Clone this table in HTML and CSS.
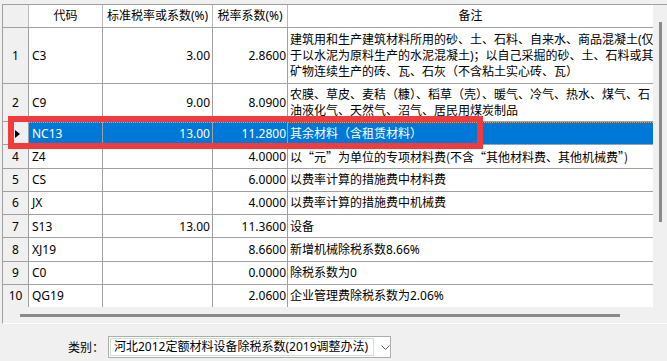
FILE: index.html
```html
<!DOCTYPE html>
<html lang="zh-CN">
<head>
<meta charset="utf-8">
<title>除税系数</title>
<link rel="stylesheet" href="styles.css">
</head>
<body>
<div class="panel">
  <div class="view">
    <div class="grid">
      <div class="row head">
        <div class="c rn"></div>
        <div class="c code center">代码</div>
        <div class="c std center">标准税率或系数(%)</div>
        <div class="c rate center">税率系数(%)</div>
        <div class="c note center">备注</div>
      </div>
      <div class="row tall3">
        <div class="c rn">1</div>
        <div class="c code">C3</div>
        <div class="c std">3.00</div>
        <div class="c rate">2.8600</div>
        <div class="c note multi"><span>建筑用和生产建筑材料所用的砂、土、石料、自来水、商品混凝土(仅<br>于以水泥为原料生产的水泥混凝土)；以自己采掘的砂、土、石料或其<br>矿物连续生产的砖、瓦、石灰（不含粘土实心砖、瓦）</span></div>
      </div>
      <div class="row tall2">
        <div class="c rn">2</div>
        <div class="c code">C9</div>
        <div class="c std">9.00</div>
        <div class="c rate">8.0900</div>
        <div class="c note multi"><span>农膜、草皮、麦秸（糠）、稻草（壳）、暖气、冷气、热水、煤气、石<br>油液化气、天然气、沼气、居民用煤炭制品</span></div>
      </div>
      <div class="row sel">
        <div class="c rn"><svg class="cur" width="5" height="8" viewBox="0 0 5 8"><polygon points="0,0 5,4 0,8" fill="#000"/></svg></div>
        <div class="c code">NC13</div>
        <div class="c std">13.00</div>
        <div class="c rate">11.2800</div>
        <div class="c note">其余材料（含租赁材料）</div>
      </div>
      <div class="row">
        <div class="c rn">4</div>
        <div class="c code">Z4</div>
        <div class="c std"></div>
        <div class="c rate">4.0000</div>
        <div class="c note cjk">以“元”为单位的专项材料费(不含“其他材料费、其他机械费”)</div>
      </div>
      <div class="row">
        <div class="c rn">5</div>
        <div class="c code">CS</div>
        <div class="c std"></div>
        <div class="c rate">6.0000</div>
        <div class="c note">以费率计算的措施费中材料费</div>
      </div>
      <div class="row">
        <div class="c rn">6</div>
        <div class="c code">JX</div>
        <div class="c std"></div>
        <div class="c rate">4.0000</div>
        <div class="c note">以费率计算的措施费中机械费</div>
      </div>
      <div class="row">
        <div class="c rn">7</div>
        <div class="c code">S13</div>
        <div class="c std">13.00</div>
        <div class="c rate">11.3600</div>
        <div class="c note">设备</div>
      </div>
      <div class="row">
        <div class="c rn">8</div>
        <div class="c code">XJ19</div>
        <div class="c std"></div>
        <div class="c rate">8.6600</div>
        <div class="c note">新增机械除税系数8.66%</div>
      </div>
      <div class="row">
        <div class="c rn">9</div>
        <div class="c code">C0</div>
        <div class="c std"></div>
        <div class="c rate">0.0000</div>
        <div class="c note">除税系数为0</div>
      </div>
      <div class="row last">
        <div class="c rn">10</div>
        <div class="c code">QG19</div>
        <div class="c std"></div>
        <div class="c rate">2.0600</div>
        <div class="c note">企业管理费除税系数为2.06%</div>
      </div>
    </div>
    <div class="hscroll"><span class="hthumb"></span></div>
  </div>
  <div class="vscroll"><span class="vthumb"></span></div>
</div>

<div class="mark"></div>

<div class="footer">
  <span class="label">类别：</span>
  <div class="combo">
    <span class="field">河北2012定额材料设备除税系数(2019调整办法)</span>
    <svg class="chev" width="9" height="5" viewBox="0 0 9 5"><polyline points="0.5,0.5 4.5,4.5 8.5,0.5" fill="none" stroke="#5a5a5a" stroke-width="1"/></svg>
  </div>
</div>
</body>
</html>
```

FILE: styles.css
```css
html, body {
  margin: 0;
  padding: 0;
}

body {
  width: 667px;
  height: 361px;
  overflow: hidden;
  position: relative;
  background: #f0f0f0;
  color: #000;
  font-family: "Noto Sans", "Noto Sans CJK SC", sans-serif;
  font-size: 12px;
}

.cjk {
  font-family: "Noto Sans CJK SC", sans-serif;
}

.panel {
  margin: 4px 0 0 2px;
  height: 318px;
  display: flex;
  border-left: 1px solid #a0a0a0;
  border-top: 1px solid #a0a0a0;
  border-bottom: 1px solid #ffffff;
}

.view {
  width: 650px;
  flex: none;
  display: flex;
  flex-direction: column;
  overflow: hidden;
}

.grid {
  display: flex;
  flex-direction: column;
  background: #fff;
}

.row {
  display: flex;
  height: 23.25px;
  box-sizing: border-box;
  border-bottom: 1px solid #a0a0a0;
}

.row.last {
  border-bottom-color: #f0f0f0;
}

.row.head {
  height: 23px;
}

.row.tall3 {
  height: 56px;
}

.row.tall2 {
  height: 38px;
}

.c {
  box-sizing: border-box;
  flex: none;
  display: flex;
  align-items: center;
  overflow: hidden;
  white-space: nowrap;
  border-right: 1px solid #a0a0a0;
  line-height: 16px;
  padding-top: 1px;
}

.rn {
  width: 26px;
  justify-content: center;
  background: #f0f0f0;
}

.code {
  width: 74px;
  padding-left: 3px;
}

.std {
  width: 110px;
  justify-content: flex-end;
  padding-right: 2px;
}

.rate {
  width: 75px;
  justify-content: flex-end;
  padding-right: 1px;
}

.note {
  width: 420px;
  padding-left: 2px;
  border-right: none;
}

.head .c {
  justify-content: center;
  padding: 0;
  border-right-color: #b9b9b9;
}

.head .note {
  width: 365px;
}

.sel .c:not(.rn) {
  color: #fff;
  background-color: #0078d7;
  background-image: linear-gradient(90deg, #f2a04a 50%, transparent 50%);
  background-size: 2px 1px;
  background-repeat: repeat-x;
  background-position: 0 0;
}

.cur {
  margin-left: 3px;
}

.hscroll {
  flex: 1;
  padding: 6px 0 0 17px;
}

.hthumb {
  display: block;
  width: 600px;
  height: 3px;
  background: #8a8a8a;
}

.vscroll {
  flex: 1;
  padding: 17px 0 0 6px;
}

.vthumb {
  display: block;
  width: 3px;
  height: 200px;
  background: #8a8a8a;
}

.mark {
  position: absolute;
  left: 8px;
  top: 116px;
  width: 475px;
  height: 33px;
  box-sizing: border-box;
  border: 6px solid #f03c3c;
}

.footer {
  display: flex;
  align-items: center;
  height: 22px;
  margin-top: 12px;
  padding-left: 68px;
}

.label {
  width: 40px;
}

.combo {
  box-sizing: border-box;
  width: 283px;
  height: 22px;
  display: flex;
  align-items: center;
  background: #fff;
  border: 1px solid #adadad;
  padding-left: 1px;
}

.field {
  box-sizing: border-box;
  width: 264px;
  height: 18px;
  line-height: 16px;
  padding-left: 3px;
  border: 1px solid #c9e7c9;
  white-space: nowrap;
  overflow: hidden;
}

.chev {
  margin-left: 7px;
}
```
